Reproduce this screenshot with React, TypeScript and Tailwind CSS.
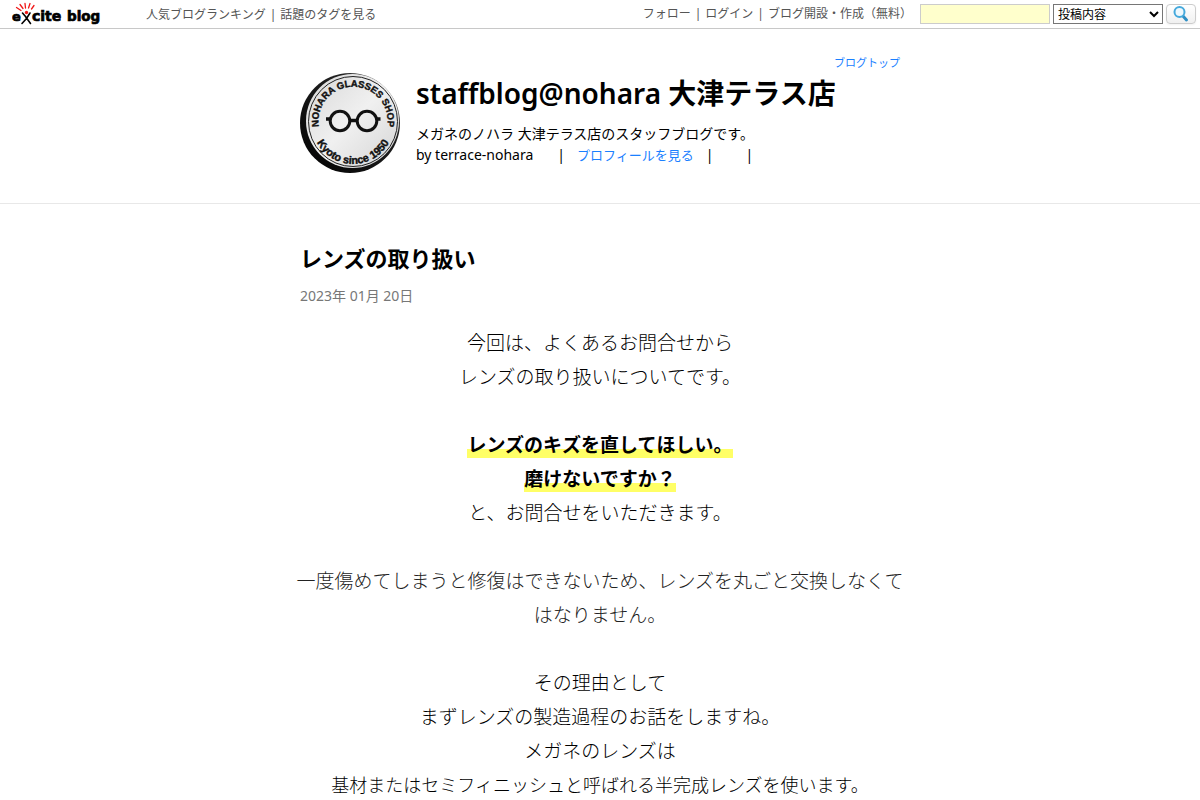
import type { ReactNode } from "react";

type Line = {
  text: ReactNode;
  tone?: "soft" | "marked" | "small";
};

const LINES: Line[] = [
  { text: "今回は、よくあるお問合せから" },
  { text: "レンズの取り扱いについてです。" },
  { text: null },
  { text: "レンズのキズを直してほしい。", tone: "marked" },
  { text: "磨けないですか？", tone: "marked" },
  { text: "と、お問合せをいただきます。" },
  { text: null },
  {
    text: (
      <>
        一度傷めてしまうと修復はできないため、レンズを丸ごと交換しなくて
        <br />
        はなりません。
      </>
    ),
    tone: "soft",
  },
  { text: null },
  { text: "その理由として" },
  { text: "まずレンズの製造過程のお話をしますね。" },
  { text: "メガネのレンズは" },
  { text: "基材またはセミフィニッシュと呼ばれる半完成レンズを使います。", tone: "small" },
];

function ExciteLogo() {
  return (
    <svg width="92" height="24" viewBox="0 0 92 24" role="img" aria-label="excite blog">
      <g stroke="#f01818" strokeWidth="1.3" strokeLinecap="round">
        <path d="M4.5 5.5 9 8.5" />
        <path d="M8 2.5 11 6.5" />
        <path d="M13 1.5 13.5 6" />
        <path d="M18 1.5 16.5 6" />
        <path d="M22 3.5 19.5 7" />
      </g>
      <circle cx="14.5" cy="10.5" r="1.7" fill="#f01818" />
      <path
        d="M10.5 11 13.5 14.5 18.5 21.5M18 11 14.5 16.5 10 21.5"
        fill="none"
        stroke="#000"
        strokeWidth="1.6"
        strokeLinecap="round"
      />
      <g fontFamily="'DejaVu Sans', sans-serif" fontSize="13" fontWeight="700" stroke="#000" strokeWidth="0.7">
        <text x="0" y="19">e</text>
        <text x="20" y="19" fontSize="14">cite</text>
        <text x="55" y="19" fontSize="13.5">blog</text>
      </g>
    </svg>
  );
}

function ShopBadge() {
  return (
    <svg
      className="shrink-0"
      width="100"
      height="100"
      viewBox="0 0 100 100"
      role="img"
      aria-label="NOHARA GLASSES SHOP Kyoto since 1950"
    >
      <defs>
        <linearGradient id="rim" x1="0" y1="1" x2="1" y2="0">
          <stop offset="0" stopColor="#000" />
          <stop offset="0.7" stopColor="#222" />
          <stop offset="1" stopColor="#999" />
        </linearGradient>
        <linearGradient id="face" x1="0" y1="0" x2="1" y2="1">
          <stop offset="0" stopColor="#d8d8d8" />
          <stop offset="0.5" stopColor="#f0f0f0" />
          <stop offset="1" stopColor="#d4d4d4" />
        </linearGradient>
        <path id="arcTop" d="M19.5 56.5A34.5 34.5 0 1 1 86.5 56.5" />
        <path id="arcBottom" d="M12 50A41 41 0 0 0 94 50" />
      </defs>
      <circle cx="50" cy="50" r="50" fill="url(#rim)" />
      <ellipse cx="52.5" cy="48" rx="46.5" ry="47" fill="url(#face)" />
      <ellipse cx="53" cy="48.5" rx="44.5" ry="45" fill="none" stroke="#222" strokeWidth="1" />
      <g
        fontFamily="'Liberation Sans', Arial, sans-serif"
        fontWeight="700"
        fill="#111"
        stroke="#111"
        strokeWidth="0.4"
        textAnchor="middle"
      >
        <text fontSize="9.5">
          <textPath href="#arcTop" startOffset="50%">
            NOHARA GLASSES SHOP
          </textPath>
        </text>
        <text fontSize="10.8">
          <textPath href="#arcBottom" startOffset="50%">
            Kyoto since 1950
          </textPath>
        </text>
      </g>
      <g fill="none" stroke="#111" strokeWidth="3">
        <circle cx="40" cy="48" r="9.8" />
        <circle cx="67" cy="48" r="9.8" />
        <path d="M49.5 47.5H57.5M26 46H31M76 46H80.5" strokeWidth="3.4" />
      </g>
    </svg>
  );
}

function SearchIcon() {
  return (
    <svg width="18" height="18" viewBox="0 0 18 18" aria-hidden="true">
      <path d="M10.5 10.5 14.5 15" stroke="#2f8fc4" strokeWidth="3" strokeLinecap="round" />
      <circle cx="7.5" cy="7" r="5" fill="#eef8fd" stroke="#45a9dc" strokeWidth="2" />
    </svg>
  );
}

function TopBar() {
  return (
    <div className="flex h-[29px] items-center border-b border-[#c8c8c8] pr-1 pl-3 text-xs text-[#555]">
      <a href="#" className="shrink-0">
        <ExciteLogo />
      </a>
      <nav className="ml-[42px] flex gap-1 pt-0.5 whitespace-nowrap">
        <a href="#">人気ブログランキング</a>
        <span>|</span>
        <a href="#">話題のタグを見る</a>
      </nav>
      <nav className="ml-auto flex gap-1 whitespace-nowrap">
        <a href="#">フォロー</a>
        <span>|</span>
        <a href="#">ログイン</a>
        <span>|</span>
        <a href="#">ブログ開設・作成（無料）</a>
      </nav>
      <form className="ml-2 flex items-center gap-[3px]" onSubmit={(e) => e.preventDefault()}>
        <input
          type="text"
          aria-label="検索キーワード"
          className="h-5 w-[130px] border border-[#ccc] bg-[#ffffcc] px-1"
        />
        <select
          aria-label="検索対象"
          defaultValue="post"
          className="h-5 w-[110px] border border-[#767676] bg-white text-xs text-black"
        >
          <option value="post">投稿内容</option>
          <option value="title">タイトル</option>
        </select>
        <button
          type="submit"
          aria-label="検索"
          className="flex h-5 w-[30px] items-center justify-center rounded border border-[#ccc] bg-linear-to-b from-white to-[#f0f0f0] shadow-xs"
        >
          <SearchIcon />
        </button>
      </form>
    </div>
  );
}

function BlogHeader() {
  return (
    <header className="border-b border-[#e8e8e8]">
      <div className="mx-auto flex h-[174px] max-w-[600px] flex-col pt-6">
        <a href="#" className="self-end text-[11px] leading-5 text-[#1a80ff]">
          ブログトップ
        </a>
        <div className="flex gap-4">
          <ShopBadge />
          <div className="whitespace-nowrap">
            <h1 className="text-[28px] leading-10 font-semibold">
              <a href="#">staffblog@nohara 大津テラス店</a>
            </h1>
            <p className="mt-2.5 text-sm leading-[22px]">メガネのノハラ 大津テラス店のスタッフブログです。</p>
            <p className="flex text-sm leading-5">
              <span>by terrace-nohara</span>
              <span className="ml-6">|</span>
              <a href="#" className="ml-3 text-[13px] text-[#1a80ff]">
                プロフィールを見る
              </a>
              <span className="ml-3">|</span>
              <span className="ml-8">|</span>
            </p>
          </div>
        </div>
      </div>
    </header>
  );
}

function BodyLine({ text, tone }: Line) {
  if (text === null) return <br />;
  if (tone === "marked") {
    return (
      <p>
        <strong className="bg-linear-to-b from-transparent from-65% to-[#ffff66] to-65% font-bold">{text}</strong>
      </p>
    );
  }
  if (tone === "soft") return <p className="-mx-1 whitespace-nowrap text-[#222]">{text}</p>;
  if (tone === "small") return <p className="text-lg leading-[34px]">{text}</p>;
  return <p>{text}</p>;
}

export default function App() {
  return (
    <div className="bg-white font-['Noto_Sans','Noto_Sans_CJK_JP',sans-serif] text-black" lang="ja">
      <TopBar />
      <BlogHeader />
      <main className="mx-auto max-w-[600px] pt-[38px]">
        <article>
          <h2 className="text-[22px] leading-8 font-bold">レンズの取り扱い</h2>
          <time dateTime="2023-01-20" className="mt-3 block text-sm leading-5 text-[#777]">
            2023年 01月 20日
          </time>
          <div className="mt-5 text-center text-[19px] leading-[34px] font-light">
            {LINES.map((line, index) => (
              <BodyLine key={index} {...line} />
            ))}
          </div>
        </article>
      </main>
    </div>
  );
}
